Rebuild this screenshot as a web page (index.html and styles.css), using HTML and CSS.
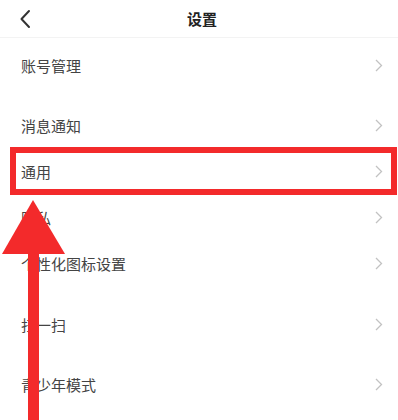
FILE: index.html
```html
<!DOCTYPE html>
<html lang="zh-CN">
<head>
<meta charset="utf-8">
<title>设置</title>
<link rel="stylesheet" href="styles.css">
</head>
<body>
<div class="page">
  <header class="topbar">
    <span class="back">
      <svg width="12" height="20" viewBox="0 0 12 20"><path d="M10 2 L2.5 10 L10 18" fill="none" stroke="#333" stroke-width="2" stroke-linecap="round" stroke-linejoin="round"/></svg>
    </span>
    <h1 class="title">设置</h1>
    <span class="spacer"></span>
  </header>
  <ul class="list">
    <li class="row first"><span>账号管理</span><svg class="chev" width="8" height="13" viewBox="0 0 8 13"><path d="M1 1 L6.5 6.5 L1 12" fill="none" stroke="#c2c2c2" stroke-width="1.3"/></svg></li>
    <li class="row gap"><span>消息通知</span><svg class="chev" width="8" height="13" viewBox="0 0 8 13"><path d="M1 1 L6.5 6.5 L1 12" fill="none" stroke="#c2c2c2" stroke-width="1.3"/></svg></li>
    <li class="row"><span>通用</span><svg class="chev" width="8" height="13" viewBox="0 0 8 13"><path d="M1 1 L6.5 6.5 L1 12" fill="none" stroke="#c2c2c2" stroke-width="1.3"/></svg></li>
    <li class="row"><span>隐私</span><svg class="chev" width="8" height="13" viewBox="0 0 8 13"><path d="M1 1 L6.5 6.5 L1 12" fill="none" stroke="#c2c2c2" stroke-width="1.3"/></svg></li>
    <li class="row tall"><span>个性化图标设置</span><svg class="chev" width="8" height="13" viewBox="0 0 8 13"><path d="M1 1 L6.5 6.5 L1 12" fill="none" stroke="#c2c2c2" stroke-width="1.3"/></svg></li>
    <li class="row gap"><span>扫一扫</span><svg class="chev" width="8" height="13" viewBox="0 0 8 13"><path d="M1 1 L6.5 6.5 L1 12" fill="none" stroke="#c2c2c2" stroke-width="1.3"/></svg></li>
    <li class="row gap"><span>青少年模式</span><svg class="chev" width="8" height="13" viewBox="0 0 8 13"><path d="M1 1 L6.5 6.5 L1 12" fill="none" stroke="#c2c2c2" stroke-width="1.3"/></svg></li>
  </ul>
  <div class="highlight"></div>
  <svg class="arrow" width="70" height="225" viewBox="0 0 70 225">
    <polygon points="33,0 2,54 65,54" fill="#f32a2b"/>
    <rect x="28" y="52" width="11" height="180" fill="#f32a2b"/>
  </svg>
</div>
</body>
</html>
```
FILE: styles.css
```css
* { box-sizing: border-box; }
html, body { margin: 0; padding: 0; background: #fff; }
body {
  font-family: "Noto Sans CJK SC", "Noto Sans", sans-serif;
  width: 398px;
  height: 420px;
  overflow: hidden;
}
.page { position: relative; width: 398px; height: 420px; }
.topbar {
  height: 38px;
  display: flex;
  align-items: center;
  padding: 0 18px 0 18px;
  border-bottom: 1px solid #f3f3f3;
}
.back { width: 30px; display: flex; align-items: center; padding-left: 1px; padding-top: 1px; }
.title {
  flex: 1;
  margin: 0;
  text-align: center;
  font-size: 15px;
  font-weight: 700;
  color: #222;
  padding-left: 6px;
  line-height: 20px;
}
.spacer { width: 30px; }
.list { list-style: none; margin: 0; padding: 0; }
.row {
  height: 46px;
  display: flex;
  align-items: center;
  justify-content: space-between;
  padding: 0 15px 0 21px;
  font-size: 15px;
  color: #444;
}
.row.first { margin-top: 4px; }
.row.gap { margin-top: 14px; }
.row.tall { height: 47px; }
.chev { display: block; }
.highlight {
  position: absolute;
  left: 10px;
  top: 147px;
  width: 387px;
  height: 48px;
  border: 6.5px solid #f32a2b;
}
.arrow { position: absolute; left: 0; top: 200px; }
```
